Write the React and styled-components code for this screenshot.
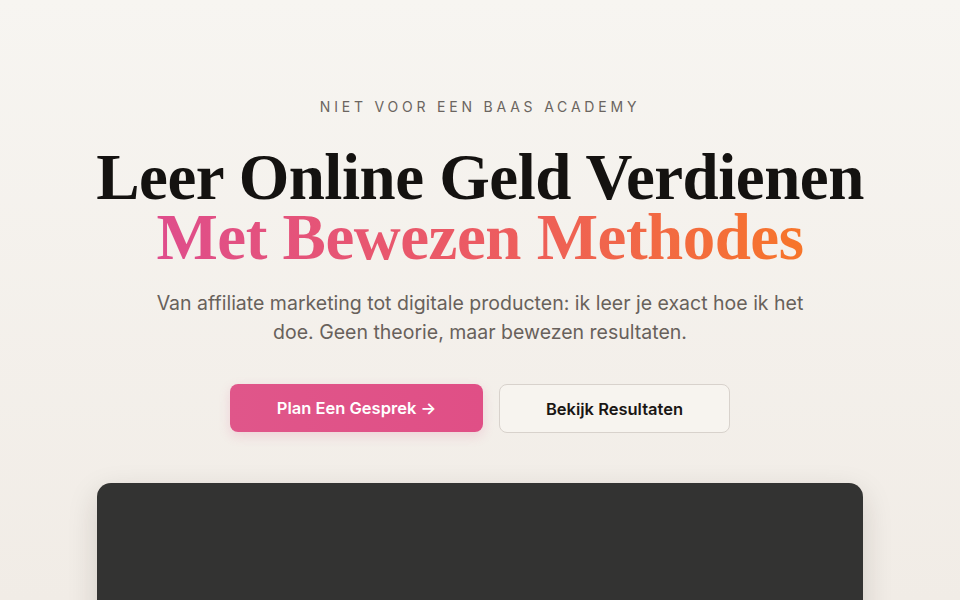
import React from "react";
import styled, { createGlobalStyle } from "styled-components";

const Global = createGlobalStyle`
  html, body { margin: 0; padding: 0; }
  body { background: #f3f0eb; font-family: Inter, "Noto Sans", sans-serif; }
  * { box-sizing: border-box; }
`;

const Page = styled.main`
  height: 600px;
  overflow: hidden;
  background: linear-gradient(180deg, #f7f5f1 0%, #f1ece6 100%);
  display: flex;
  flex-direction: column;
  align-items: center;
  padding-top: 97px;
`;

const Eyebrow = styled.p`
  margin: 0;
  font-size: 14px;
  letter-spacing: 3.8px;
  color: #6b6560;
  font-weight: 400;
  line-height: 20px;
`;

const Title = styled.h1`
  margin: 30px 0 0;
  font-family: "Liberation Serif", "DejaVu Serif", serif;
  font-weight: 700;
  font-size: 65px;
  line-height: 60px;
  letter-spacing: -0.5px;
  color: #141210;
  text-align: center;
`;

const Line = styled.span`
  display: block;
`;

const Gradient = styled.span`
  display: inline-block;
  background: linear-gradient(90deg, #df4d8c 0%, #ec5b62 50%, #f7752a 100%);
  -webkit-background-clip: text;
  background-clip: text;
  color: transparent;
`;

const Lead = styled.p`
  margin: 22px 0 0;
  max-width: 664px;
  font-size: 19.5px;
  line-height: 29px;
  color: #68615b;
  text-align: center;
`;

const Actions = styled.div`
  display: flex;
  gap: 16px;
  margin-top: 37px;
`;

const Button = styled.button`
  height: ${(p) => (p.$primary ? "48px" : "49px")};
  width: ${(p) => p.$w}px;
  border-radius: 8px;
  font-family: Inter, "Noto Sans", sans-serif;
  font-size: 16.5px;
  font-weight: 600;
  cursor: pointer;
  border: ${(p) => (p.$primary ? "none" : "1px solid #d8d2cc")};
  background: ${(p) => (p.$primary ? "linear-gradient(90deg, #e0568a, #e04f86)" : "#f7f4ef")};
  color: ${(p) => (p.$primary ? "#ffffff" : "#1a1614")};
  box-shadow: ${(p) => (p.$primary ? "0 4px 12px rgba(224, 80, 134, 0.18)" : "none")};
`;

const Preview = styled.div`
  margin-top: 50px;
  width: 766px;
  flex: 1;
  min-height: 200px;
  background: #333332;
  border-radius: 14px 14px 0 0;
  box-shadow: 0 10px 30px rgba(40, 30, 20, 0.15);
`;

export default function App() {
  return (
    <>
      <Global />
      <Page>
        <Eyebrow>NIET VOOR EEN BAAS ACADEMY</Eyebrow>
        <Title>
          <Line>Leer Online Geld Verdienen</Line>
          <Line>
            <Gradient>Met Bewezen Methodes</Gradient>
          </Line>
        </Title>
        <Lead>
          Van affiliate marketing tot digitale producten: ik leer je exact hoe ik het doe. Geen theorie,
          maar bewezen resultaten.
        </Lead>
        <Actions>
          <Button $primary $w={253}>Plan Een Gesprek →</Button>
          <Button $w={231}>Bekijk Resultaten</Button>
        </Actions>
        <Preview />
      </Page>
    </>
  );
}
